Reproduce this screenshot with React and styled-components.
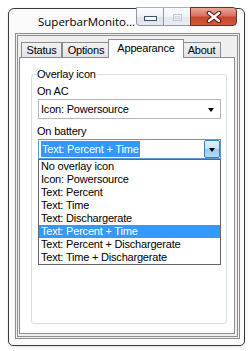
import React from "react";
import styled, { createGlobalStyle } from "styled-components";

const GlobalStyle = createGlobalStyle`
  html, body {
    margin: 0;
    padding: 0;
    background: #ffffff;
  }
  body {
    font-family: "Liberation Sans", Arial, sans-serif;
    font-size: 11px;
    letter-spacing: -0.2px;
    color: #000;
  }
`;

const tabs = [
  { label: "Status", width: 41 },
  { label: "Options", width: 48 },
  { label: "Appearance", width: 76, active: true },
  { label: "About", width: 39 },
];

const batteryOptions = [
  "No overlay icon",
  "Icon: Powersource",
  "Text: Percent",
  "Text: Time",
  "Text: Dischargerate",
  "Text: Percent + Time",
  "Text: Percent + Dischargerate",
  "Text: Time + Dischargerate",
];

function App() {
  return (
    <Page>
      <GlobalStyle />
      <Window>
        <TitleBar>
          <Title>SuperbarMonito...</Title>
          <CaptionButtons>
            <MinButton>
              <svg width="13" height="5" viewBox="0 0 13 5">
                <rect x="0.5" y="0.5" width="12" height="4" fill="#fff" stroke="#3b5372" />
              </svg>
            </MinButton>
            <MaxButton>
              <svg width="9" height="7" viewBox="0 0 9 7">
                <rect x="0.5" y="0.5" width="8" height="6" fill="none" stroke="#c3c9d2" />
                <rect x="2.5" y="2.5" width="4" height="2" fill="none" stroke="#d4d9e0" />
              </svg>
            </MaxButton>
            <CloseButton>
              <svg width="16" height="12" viewBox="0 0 16 12">
                <path d="M3 2 L13 10 M13 2 L3 10" stroke="#5a1a10" strokeWidth="4.6" strokeLinecap="round" />
                <path d="M3 2 L13 10 M13 2 L3 10" stroke="#ffffff" strokeWidth="2.4" strokeLinecap="round" />
              </svg>
            </CloseButton>
          </CaptionButtons>
        </TitleBar>
        <Client>
          <TabStrip>
            {tabs.map((t) => (
              <Tab key={t.label} $width={t.width} $active={t.active}>
                {t.label}
              </Tab>
            ))}
          </TabStrip>
          <Panel>
            <GroupBox>
              <Legend>Overlay icon</Legend>
              <Label>On AC</Label>
              <Combo>
                <ComboText>Icon: Powersource</ComboText>
                <ArrowBox>
                  <Arrow />
                </ArrowBox>
              </Combo>
              <Label $gap>On battery</Label>
              <Combo $focused>
                <ComboText>
                  <Highlight>Text: Percent + Time</Highlight>
                </ComboText>
                <DropButton>
                  <Arrow />
                </DropButton>
                <DropList>
                  {batteryOptions.map((o) => (
                    <Item key={o} $selected={o === "Text: Percent + Time"}>
                      {o}
                    </Item>
                  ))}
                </DropList>
              </Combo>
            </GroupBox>
          </Panel>
        </Client>
      </Window>
    </Page>
  );
}

const Page = styled.div`
  padding: 8px 6px 5px 8px;
`;

const Window = styled.div`
  width: 237px;
  height: 338px;
  box-sizing: border-box;
  border: 1px solid #3a3a3a;
  border-radius: 6px 6px 5px 5px;
  background: #fbfbfb;
  display: flex;
  flex-direction: column;
  box-shadow: 0 1px 3px rgba(0, 0, 0, 0.12);
`;

const TitleBar = styled.div`
  height: 24px;
  display: flex;
  align-items: center;
  padding-left: 29px;
  padding-right: 7px;
`;

const Title = styled.div`
  flex: 1;
  font-family: "Open Sans", "Liberation Sans", sans-serif;
  font-size: 11.5px;
  letter-spacing: 0;
  color: #000;
  white-space: nowrap;
  margin-top: 1px;
`;

const CaptionButtons = styled.div`
  align-self: flex-start;
  margin-top: -2px;
  display: flex;
`;

const CaptionButton = styled.div`
  height: 19px;
  box-sizing: border-box;
  display: flex;
  align-items: center;
  justify-content: center;
  border: 1px solid #8c98a8;
  border-top-color: #a9b3c0;
`;

const MinButton = styled(CaptionButton)`
  width: 28px;
  border-radius: 0 0 0 4px;
  background: linear-gradient(#fbfcfd, #eef1f4 50%, #dde2e9 51%, #e6eaef);
  align-items: flex-end;
  padding-bottom: 4px;
`;

const MaxButton = styled(CaptionButton)`
  width: 28px;
  margin-left: -1px;
  background: linear-gradient(#fbfcfd, #f1f3f6 50%, #e4e8ed 51%, #ebeef2);
  padding-top: 1px;
`;

const CloseButton = styled(CaptionButton)`
  width: 47px;
  margin-left: -1px;
  border-color: #7a2a1c;
  border-radius: 0 4px 4px 0;
  background: linear-gradient(#eba797, #d9735e 45%, #c7462f 55%, #d05a3e);
`;

const Client = styled.div`
  flex: 1;
  margin: 0 4px 6px 6px;
  border: 3px double #8d8d8d;
  background: #f0f0f0;
  display: flex;
  flex-direction: column;
  padding: 3px 2px 2px 1px;
`;

const TabStrip = styled.div`
  height: 18px;
  display: flex;
  align-items: flex-end;
  padding-left: 2px;
`;

const Tab = styled.div`
  width: ${(p) => p.$width}px;
  height: ${(p) => (p.$active ? 19 : 15)}px;
  box-sizing: border-box;
  border: 1px solid #898c95;
  border-bottom: none;
  margin: 0 ${(p) => (p.$active ? -2 : 0)}px ${(p) => (p.$active ? -1 : 0)}px;
  position: relative;
  z-index: ${(p) => (p.$active ? 1 : 0)};
  background: ${(p) => (p.$active ? "#ffffff" : "linear-gradient(#f2f2f2, #e3e3e3)")};
  display: flex;
  justify-content: center;
  align-items: ${(p) => (p.$active ? "flex-start" : "center")};
  padding-top: ${(p) => (p.$active ? 2 : 0)}px;
  line-height: 13px;
  white-space: nowrap;
`;

const Panel = styled.div`
  flex: 1;
  background: #ffffff;
  border: 1px solid #898c95;
  display: flex;
  flex-direction: column;
  padding: 10px 7px 9px 11px;
`;

const GroupBox = styled.fieldset`
  flex: 1;
  margin: 0;
  min-width: 0;
  border: 1px solid #d5dfe5;
  border-radius: 3px;
  padding: 4px 5px 0 5px;
  display: flex;
  flex-direction: column;
`;

const Legend = styled.legend`
  padding: 0 1px 0 0;
  line-height: 13px;
`;

const Label = styled.div`
  line-height: 13px;
  margin-top: ${(p) => (p.$gap ? 6 : 0)}px;
`;

const Combo = styled.div`
  position: relative;
  height: 20px;
  box-sizing: border-box;
  margin-top: 1px;
  margin-left: 1px;
  border: 1px solid ${(p) => (p.$focused ? "#5b9bd5" : "#b4b7bf")};
  background: #ffffff;
  display: flex;
  align-items: center;
  padding-left: 2px;
`;

const ComboText = styled.div`
  flex: 1;
  line-height: 13px;
  white-space: nowrap;
`;

const Highlight = styled.span`
  background: #3399ff;
  color: #ffffff;
  padding: 2px 1px 2px 1px;
`;

const ArrowBox = styled.div`
  width: 16px;
  align-self: stretch;
  display: flex;
  align-items: center;
  justify-content: center;
  padding-right: 1px;
`;

const DropButton = styled.div`
  width: 16px;
  align-self: stretch;
  box-sizing: border-box;
  border: 1px solid #3c7fb1;
  border-radius: 2px;
  background: linear-gradient(#e3f1fc, #c6e1f7 48%, #9ccaee 52%, #b3d9f5);
  display: flex;
  align-items: center;
  justify-content: center;
`;

const Arrow = styled.div`
  width: 0;
  height: 0;
  border-left: 3.5px solid transparent;
  border-right: 3.5px solid transparent;
  border-top: 4px solid #000;
  margin-top: 1px;
`;

const DropList = styled.div`
  position: absolute;
  top: 100%;
  left: -1px;
  right: -1px;
  margin-top: 1px;
  border: 1px solid #646464;
  background: #ffffff;
  z-index: 2;
`;

const Item = styled.div`
  height: 13px;
  line-height: 13px;
  padding-left: 2px;
  white-space: nowrap;
  background: ${(p) => (p.$selected ? "#3399ff" : "transparent")};
  color: ${(p) => (p.$selected ? "#ffffff" : "#000000")};
`;

export default App;
